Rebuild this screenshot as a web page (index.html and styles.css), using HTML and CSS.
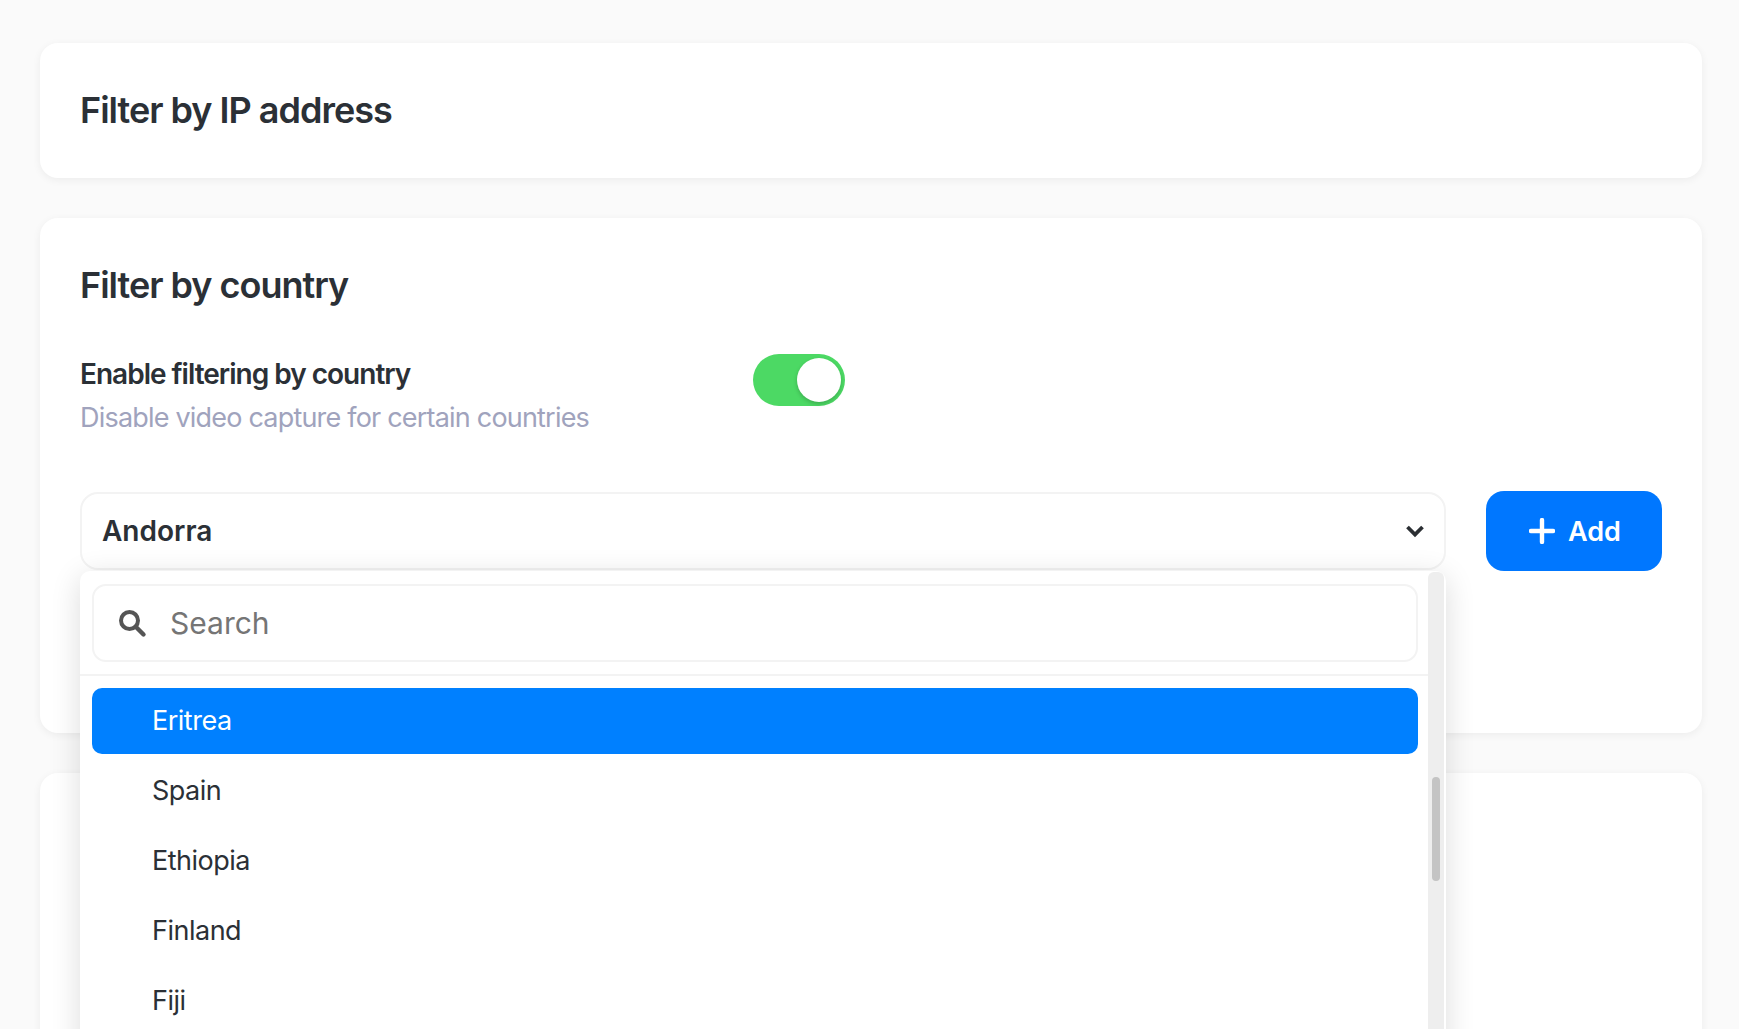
FILE: index.html
```html
<!DOCTYPE html>
<html lang="en">
<head>
  <meta charset="UTF-8" />
  <title>Filters</title>
  <link rel="stylesheet" href="styles.css">
</head>
<body>

<div class="page">
  <section class="card">
    <h2>Filter by IP address</h2>
  </section>

  <section class="card card-country">
    <h2>Filter by country</h2>

    <div class="setting">
      <div class="setting-text">
        <div class="setting-title">Enable filtering by country</div>
        <div class="setting-sub">Disable video capture for certain countries</div>
      </div>
      <div class="toggle"><span class="knob"></span></div>
    </div>

    <div class="add-row">
      <div class="select-wrap">
        <div class="select">
          <span>Andorra</span>
          <svg class="chevron" width="20" height="14" viewBox="0 0 20 14"><path d="M2.5 3 10 10.5 17.5 3" fill="none" stroke="#2b2f33" stroke-width="3.8"/></svg>
        </div>

        <div class="dropdown">
          <div class="dropdown-main">
            <div class="search-area">
              <div class="search">
                <svg width="30" height="30" viewBox="0 0 30 30"><circle cx="12.5" cy="12.5" r="8.5" fill="none" stroke="#555" stroke-width="4"/><path d="M19 19l7.5 7.5" stroke="#555" stroke-width="4.4" stroke-linecap="round"/></svg>
                <span>Search</span>
              </div>
            </div>
            <ul class="options">
              <li class="active">Eritrea</li>
              <li>Spain</li>
              <li>Ethiopia</li>
              <li>Finland</li>
              <li>Fiji</li>
            </ul>
          </div>
          <div class="scrollbar"><div class="thumb"></div></div>
        </div>
      </div>

      <button class="btn-add">
        <svg width="26" height="26" viewBox="0 0 26 26"><path d="M13 2v22M2 13h22" stroke="#fff" stroke-width="4.4" stroke-linecap="round"/></svg>
        Add
      </button>
    </div>
  </section>

  <section class="card card-next"></section>
</div>

</body>
</html>
```

FILE: styles.css
```css
html, body {
  height: 100%;
  overflow: hidden;
}

body {
  font-family: 'Inter', sans-serif;
  background: #fafafa;
  color: #2b3036;
  margin: 0;
}

.page {
  padding: 43px 37px 0 40px;
  display: flex;
  flex-direction: column;
  gap: 40px;
}

.card {
  background: white;
  border-radius: 18px;
  box-shadow: 0 2px 8px rgba(0,0,0,0.06);
  padding: 40px;
  height: 135px;
  box-sizing: border-box;
}

.card-country {
  height: 515px;
}

.card-next {
  height: 400px;
  flex-shrink: 0;
}

h2 {
  margin: 0;
  font-size: 36px;
  line-height: 55px;
  font-weight: 600;
  letter-spacing: -1px;
}

.setting {
  display: flex;
  align-items: flex-start;
  margin-top: 40px;
}

.setting-text {
  width: 673px;
}

.setting-title {
  font-size: 28px;
  line-height: 43px;
  font-weight: 600;
  letter-spacing: -1px;
}

.setting-sub {
  font-size: 27px;
  line-height: 44px;
  color: #a0a3bd;
  letter-spacing: -0.8px;
}

.toggle {
  width: 92px;
  height: 52px;
  margin-top: 1px;
  background: #4cd964;
  border-radius: 26px;
  display: flex;
  align-items: center;
  justify-content: flex-end;
  padding-right: 4px;
  box-sizing: border-box;
}

.knob {
  width: 44px;
  height: 44px;
  border-radius: 50%;
  background: white;
  box-shadow: 0 2px 4px rgba(0,0,0,0.2);
}

.add-row {
  display: flex;
  gap: 40px;
  margin-top: 51px;
  align-items: center;
}

.select-wrap {
  position: relative;
  width: 1366px;
}

.select {
  height: 78px;
  box-sizing: border-box;
  border: 2px solid #f3f3f3;
  border-radius: 18px;
  background: white;
  padding: 0 19px 0 20px;
  display: flex;
  align-items: center;
  justify-content: space-between;
  font-size: 28px;
  font-weight: 600;
}

.btn-add {
  width: 176px;
  height: 80px;
  padding-left: 8px;
  background-color: #0077ff;
  color: white;
  border: none;
  border-radius: 18px;
  font-family: inherit;
  font-size: 27px;
  font-weight: 600;
  display: flex;
  align-items: center;
  justify-content: center;
  gap: 13px;
}

.dropdown {
  position: absolute;
  top: 79px;
  left: 0;
  width: 1366px;
  height: 560px;
  background: white;
  border-radius: 10px 10px 0 0;
  box-shadow: 0 6px 30px rgba(0,0,0,0.14);
  display: flex;
}

.dropdown-main {
  flex: 1;
}

.search-area {
  padding: 13px 10px 12px 12px;
  border-bottom: 2px solid #f3f3f3;
}

.search {
  height: 78px;
  box-sizing: border-box;
  border: 2px solid #f3f3f3;
  border-radius: 14px;
  display: flex;
  align-items: center;
  gap: 23px;
  padding-left: 23px;
  font-size: 30px;
  color: #757575;
}

.options {
  list-style: none;
  margin: 12px 0 0;
  padding: 0 10px 0 12px;
}

.options li {
  height: 66px;
  line-height: 66px;
  margin-bottom: 4px;
  padding-left: 60px;
  font-size: 27px;
  letter-spacing: -0.5px;
  border-radius: 10px;
}

.options li.active {
  background: #0080ff;
  color: white;
}

.scrollbar {
  width: 16px;
  margin-right: 2px;
  margin-top: 1px;
  background: #eeeeee;
  border-radius: 6px 6px 0 0;
  box-sizing: border-box;
  padding-top: 205px;
}

.thumb {
  width: 8px;
  height: 104px;
  margin-left: 4px;
  background: #c4c4c4;
  border-radius: 4px;
}
```
